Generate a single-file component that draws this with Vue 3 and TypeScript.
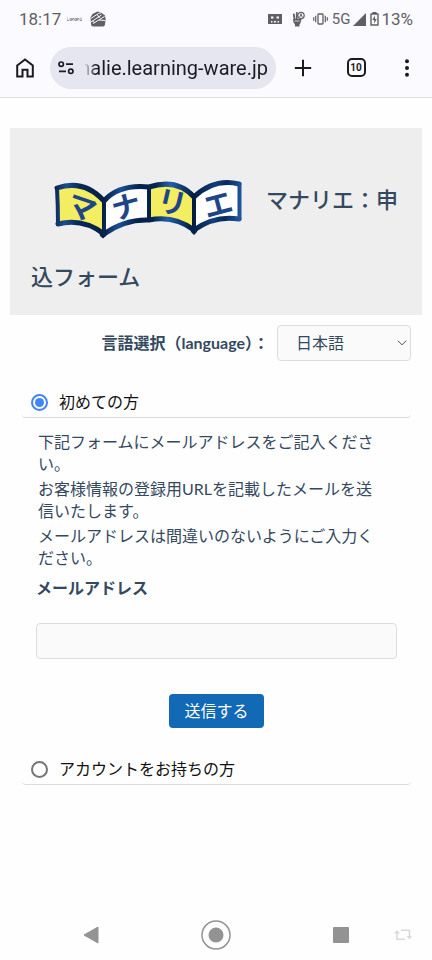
<script setup lang="ts">
import { ref } from 'vue'

type Visitor = 'new' | 'member'

const address = ref('manalie.learning-ware.jp')
const language = ref('ja')
const visitor = ref<Visitor>('new')
const email = ref('')
const notes: string[] = [
  '下記フォームにメールアドレスをご記入ください。',
  'お客様情報の登録用URLを記載したメールを送信いたします。',
  'メールアドレスは間違いのないようにご入力ください。',
]
</script>

<template>
  <div class="screen">
    <div class="chrome">
      <div class="status">
        <span class="clock">18:17</span>
        <svg class="mini" width="15" height="6" viewBox="0 0 15 6" aria-hidden="true">
          <path d="M0 1.500v3h2M3 2.500h1.500v2H3zM5.500 4.500v-2H7v2M8 2.500h1.500v2H8zM10.500 4.500v-2H12v2M13 4.500h2M14 1.500v3" fill="none" stroke="#97979b" stroke-width="1" />
        </svg>
        <svg width="16" height="16" viewBox="0 0 16 16" aria-hidden="true">
          <path d="M7.500 .4l3.500 1 4 3 .6 4-.8 6-1.500 1H3l-1.800-1L.5 6.500l2-3.500z" fill="#606064" />
          <path d="M.8 7.500L8.500 2.500 11 1.800M1 11L11.500 4M3 12.500L14.500 5.500M7.500 4l2 3M9 9l6 .5M5 12l-2.500-2" fill="none" stroke="#fbfaff" stroke-width="1" />
        </svg>
        <span class="fill"></span>
        <svg width="14" height="12" viewBox="0 0 14 12" aria-hidden="true">
          <path fill="#606064" fill-rule="evenodd" d="M0 1h14v10H0zM3 3.500v2h2.500v-2zM8.500 3.500v2H11v-2zM3 8v1.500h1.500V8zM6 8v1.500h2V8zM9.500 8v1.500H11V8z" />
        </svg>
        <svg class="hand" width="13" height="16" viewBox="0 0 13 16" aria-hidden="true">
          <path d="M1.800 3.500l.8 5M4.800 2v6" fill="none" stroke="#606064" stroke-width="1.800" stroke-linecap="round" />
          <path d="M1 8h8.500l-1 4-1 1.500v2H3v-2L1.300 11z" fill="#606064" />
          <circle cx="9" cy="4.500" r="3.200" fill="#fbfaff" stroke="#606064" stroke-width="1.200" />
          <path d="M7.800 6L9 2.800 10.200 6M2 10.500h5" fill="none" stroke="#606064" stroke-width="1" />
          <path d="M2.500 10h5" stroke="#fbfaff" stroke-width=".7" />
        </svg>
        <svg class="vibrate" width="15" height="12" viewBox="0 0 15 12" aria-hidden="true">
          <path d="M.7 4.200v3.600M2.700 2.800v6.400M12.300 2.800v6.400M14.300 4.200v3.600" stroke="#606064" stroke-width="1.200" />
          <rect x="5" y="1" width="5" height="10" rx=".8" fill="none" stroke="#606064" stroke-width="1.300" />
        </svg>
        <span class="network">5G</span>
        <svg class="signal" width="13" height="13" viewBox="0 0 13 13" aria-hidden="true"><path d="M13 0v13H0z" fill="#606064" /></svg>
        <svg class="battery" width="9" height="14" viewBox="0 0 9 14" aria-hidden="true">
          <path d="M3 2V.7h3V2M1 2h7v11H1z" fill="none" stroke="#606064" stroke-width="1.400" stroke-linejoin="round" />
          <path d="M5 3.500L2.300 8h1.900v3.500L6.800 7H5z" fill="#606064" />
        </svg>
        <span class="percent">13%</span>
      </div>
      <div class="toolbar">
        <button class="tool" type="button" aria-label="Home">
          <svg width="18" height="20" viewBox="0 0 18 20"><path d="M1.200 7.500L9 1.400l7.800 6.100V18.500h-5.300v-6.800h-5v6.800H1.200z" fill="none" stroke="#1b1b20" stroke-width="2" /></svg>
        </button>
        <div class="omnibox">
          <svg width="16" height="14" viewBox="0 0 16 14" aria-hidden="true">
            <g fill="none" stroke="#1b1b20" stroke-width="1.700"><circle cx="3.200" cy="3.200" r="2.200" /><circle cx="12.800" cy="10.300" r="2.200" /><path d="M8 3.200h7M1 10.300h7" /></g>
          </svg>
          <div class="address-clip"><input v-model="address" class="address" type="text" aria-label="Address" /></div>
        </div>
        <button class="tool" type="button" aria-label="New tab">
          <svg width="18" height="18" viewBox="0 0 18 18"><path d="M9 .8v16.400M.8 9h16.400" stroke="#1b1b20" stroke-width="2" /></svg>
        </button>
        <button class="tool tabs" type="button" aria-label="Tabs"><span class="count">10</span></button>
        <button class="tool" type="button" aria-label="Menu">
          <svg width="6" height="18" viewBox="0 0 6 18"><g fill="#1b1b20"><circle cx="3" cy="2.200" r="2" /><circle cx="3" cy="9" r="2" /><circle cx="3" cy="15.800" r="2" /></g></svg>
        </button>
      </div>
    </div>

    <main class="page">
      <h1 class="banner"><svg class="logo" width="235" height="80" viewBox="0 -3 235 80" aria-hidden="true">
        <defs>
          <linearGradient id="ink" gradientUnits="userSpaceOnUse" x1="24" x2="211" y1="0" y2="12">
            <stop offset="0" stop-color="#06244f" /><stop offset=".07" stop-color="#1b4c8e" /><stop offset=".14" stop-color="#08285a" />
            <stop offset=".27" stop-color="#062047" /><stop offset=".36" stop-color="#1b4f95" /><stop offset=".45" stop-color="#06234d" />
            <stop offset=".54" stop-color="#06234d" /><stop offset=".62" stop-color="#2460a6" /><stop offset=".68" stop-color="#123f7c" />
            <stop offset=".75" stop-color="#041c43" /><stop offset=".86" stop-color="#123f7c" /><stop offset=".92" stop-color="#09295b" />
            <stop offset="1" stop-color="#1f559c" />
          </linearGradient>
        </defs>
        <path d="M26 23Q53 14 73 36V69Q52 53 27 59Q27 40 26 23Z" fill="#f3ed62" />
        <path d="M73 36Q88 19 118 22V55Q94 54 73 69Z" fill="#fff" />
        <path d="M118 22Q146 13 163 32V65Q143 50 118 55Z" fill="#f3ed62" />
        <path d="M163 32Q183 13 208 19V54Q184 50 163 65Z" fill="#fff" />
        <g fill="none" stroke="url(#ink)" stroke-linejoin="round" stroke-linecap="round">
          <path d="M26 23Q53 14 73 36Q88 19 118 22Q146 13 163 32Q183 13 208 19" stroke-width="5" />
          <path d="M27 59Q52 53 73 69Q94 54 118 55Q143 50 163 65Q184 50 208 54" stroke-width="5" />
          <path d="M26 23Q27 40 27 59M73 36V69M118 22V55M163 32V65M208.500 19V54" stroke-width="4" />
        </g>
        <path d="M68 65h9l-2 6-3 2.500-3-2.500zM159 61h8l-1 6-3 3-3-3z" fill="#06234d" />
        <g class="mark">
          <text x="51" y="53" transform="rotate(19 51 42)">マ</text>
          <text x="95" y="52" transform="rotate(-15 95 41)">ナ</text>
          <text x="141" y="48" transform="rotate(13 141 37)">リ</text>
          <text x="187" y="50" transform="rotate(-15 187 39)">エ</text>
        </g>
      </svg>マナリエ：申込フォーム</h1>

      <div class="language">
        <label for="language">言語選択（language）：</label>
        <div class="select-box">
          <select id="language" v-model="language"><option value="ja">日本語</option></select>
          <svg class="chevron" width="10" height="6" viewBox="0 0 10 6" aria-hidden="true"><path d="M.7 .7L5 4.800 9.300 .7" fill="none" stroke="#4b5a66" stroke-width="1" /></svg>
        </div>
      </div>

      <form class="entry" @submit.prevent>
        <label class="choice"><input v-model="visitor" type="radio" name="visitor" value="new" />初めての方</label>
        <div v-if="visitor === 'new'" class="panel">
          <div class="notes"><p v-for="note in notes" :key="note">{{ note }}</p></div>
          <label class="field-label" for="email">メールアドレス</label>
          <input id="email" v-model="email" class="field" type="email" />
          <button class="submit" type="submit">送信する</button>
        </div>
        <label class="choice"><input v-model="visitor" type="radio" name="visitor" value="member" />アカウントをお持ちの方</label>
      </form>
    </main>

    <nav class="system">
      <button type="button" aria-label="Back"><svg width="16" height="18" viewBox="0 0 16 18"><path d="M15 1v16L1 9z" fill="#939393" stroke="#939393" stroke-linejoin="round" /></svg></button>
      <button type="button" aria-label="Home screen"><svg width="30" height="30" viewBox="0 0 30 30"><circle cx="15" cy="15" r="14" fill="none" stroke="#939393" stroke-width="1.500" /><circle cx="15" cy="15" r="7.500" fill="#939393" /></svg></button>
      <button type="button" aria-label="Recent apps"><svg width="16" height="16" viewBox="0 0 16 16"><rect width="16" height="16" rx="1" fill="#939393" /></svg></button>
      <button class="rotate" type="button" aria-label="Rotate"><svg width="18" height="12" viewBox="0 0 18 12"><path d="M11 10.200H3V3M7 1.200h8.500V8" fill="none" stroke="#d9d9d9" stroke-width="1.500" /><path d="M0 4.500L3 1l3 3.500zM12.500 7l3 3.500 2.500-3.500z" fill="#d9d9d9" /></svg></button>
    </nav>
  </div>
</template>

<style>
body {
  margin: 0;
  background: #fefefe;
}
</style>

<style scoped>
.screen {
  box-sizing: border-box;
  display: flex;
  flex-direction: column;
  min-height: 100vh;
  color: #34495e;
  font: 16px/22px Lato, "Noto Sans CJK JP", sans-serif;
}
button, input, select {
  box-sizing: border-box;
  margin: 0;
  padding: 0;
  border: 0;
  background: none;
  color: inherit;
  font: inherit;
}
svg { flex: none; }
.chrome {
  border-bottom: 1px solid #e0e0e5;
  background: #fbfaff;
  font-family: Roboto, sans-serif;
}
.status {
  display: flex;
  align-items: center;
  height: 38px;
  padding: 0 19px;
  color: #606064;
  font-size: 17px;
}
.clock { margin-right: 6px; }
.mini { margin-right: 8px; }
.fill { flex: 1; }
.hand { margin: 0 8px 0 10px; }
.vibrate { margin-right: 4px; }
.network { font-size: 15px; }
.signal { margin: 0 4px 0 3px; }
.battery { margin-right: 2px; }
.toolbar {
  display: flex;
  align-items: center;
  height: 59px;
  padding: 0 8px;
}
.tool {
  display: flex;
  flex: none;
  align-items: center;
  justify-content: center;
  width: 34px;
  height: 40px;
  color: #1b1b20;
}
.omnibox {
  display: flex;
  flex: 1;
  align-items: center;
  gap: 10px;
  min-width: 0;
  height: 42px;
  margin: 0 10px 0 8px;
  padding: 0 8px;
  box-sizing: border-box;
  border-radius: 21px;
  background: #e6e6f1;
}
.address-clip {
  display: flex;
  flex: 1;
  justify-content: flex-end;
  min-width: 0;
  overflow: hidden;
  mask-image: linear-gradient(to right, transparent, #000 12px);
}
.address {
  flex: none;
  width: 240px;
  height: 30px;
  color: #1b1b20;
  font-size: 20px;
  text-align: right;
}
.tabs { margin: 0 17px 0 19px; }
.count {
  box-sizing: border-box;
  width: 19px;
  height: 19px;
  border: 2px solid #1b1b20;
  border-radius: 5px;
  font-size: 10px;
  font-weight: 700;
  line-height: 15px;
}
.page {
  flex: 1;
  padding: 30px 10px 20px;
}
.banner {
  margin: 0;
  padding: 22px 21px 16px;
  background: #eee;
  font-size: 22px;
  font-weight: 500;
  line-height: 45px;
}
.logo {
  margin: 12px 0;
  vertical-align: middle;
}
.mark {
  fill: #1d4587;
  font-size: 29px;
  font-weight: 700;
  text-anchor: middle;
}
.language {
  display: flex;
  align-items: center;
  justify-content: flex-end;
  padding: 10px 11px 0;
  font-weight: 700;
}
.select-box {
  position: relative;
  width: 134px;
  margin-left: 8px;
}
select {
  display: block;
  appearance: none;
  width: 100%;
  height: 36px;
  padding-left: 18px;
  border: 1px solid #ddd;
  border-radius: 4px;
  background: #fafafa;
  font-weight: 400;
}
.chevron {
  position: absolute;
  top: 15px;
  right: 4px;
  pointer-events: none;
}
.entry { padding: 26px 11px 0 12px; }
.choice {
  display: flex;
  align-items: center;
  gap: 11px;
  height: 30px;
  padding-left: 9px;
  border-bottom: 1px solid #ddd;
  border-radius: 4px;
  color: #111;
}
.choice input {
  display: grid;
  place-items: center;
  appearance: none;
  width: 17px;
  height: 17px;
  border: 2px solid #767676;
  border-radius: 50%;
}
.choice input:checked { border-color: #4285f4; }
.choice input:checked::before {
  content: "";
  width: 9px;
  height: 9px;
  border-radius: 50%;
  background: #4285f4;
}
.panel {
  display: flex;
  flex-direction: column;
  padding: 13px 14px 26px;
}
.notes {
  padding: 0 14px 0 2px;
}
.notes p { margin: 0 0 3px; }
.field-label {
  margin-top: 5px;
  font-weight: 700;
}
.field {
  height: 36px;
  margin: 24px 0 35px;
  padding: 0 10px;
  border: 1px solid #ddd;
  border-radius: 4px;
  background: #fafafa;
}
.submit {
  align-self: center;
  height: 34px;
  padding: 0 15px;
  border-radius: 4px;
  background: #1269b5;
  color: #fff;
}
.system {
  display: grid;
  grid-template-columns: 1fr 1fr 1fr;
  align-items: center;
  position: relative;
  height: 50px;
  padding: 0 28px;
}
.system button {
  display: grid;
  place-items: center;
  height: 40px;
}
.system .rotate {
  position: absolute;
  right: 20px;
}
</style>
